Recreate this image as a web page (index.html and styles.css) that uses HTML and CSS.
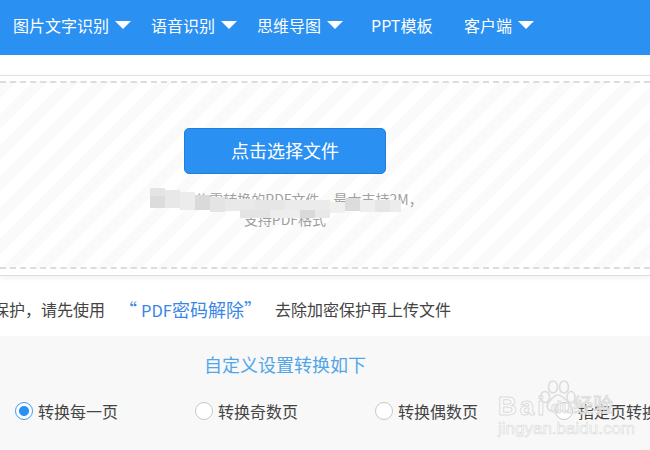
FILE: index.html
```html
<!DOCTYPE html>
<html lang="zh-CN">
<head>
<meta charset="utf-8">
<title>PDF转换</title>
<link rel="stylesheet" href="styles.css">
</head>
<body>
<nav class="nav">
  <div class="nav-item nav-a">图片文字识别<i class="arrow"></i></div>
  <div class="nav-item nav-b">语音识别<i class="arrow"></i></div>
  <div class="nav-item nav-c">思维导图<i class="arrow"></i></div>
  <div class="nav-item nav-d">PPT模板</div>
  <div class="nav-item">客户端<i class="arrow"></i></div>
</nav>
<section class="upload">
  <div class="drop">
    <button class="pick">点击选择文件</button>
    <p class="hint">请上传需转换的PDF文件，最大支持2M，</p>
    <p class="hint hint2">支持PDF格式</p>
  </div>
</section>
<p class="notice">
  <span class="notice-a">保护，请先使用</span>
  <a class="notice-link">“ <span class="latin">PDF</span>密码解除”</a>
  <span class="notice-c">去除加密保护再上传文件</span>
</p>
<section class="settings">
  <h2 class="settings-title">自定义设置转换如下</h2>
  <div class="options">
    <label class="option"><i class="radio on"></i>转换每一页</label>
    <label class="option"><i class="radio"></i>转换奇数页</label>
    <label class="option"><i class="radio"></i>转换偶数页</label>
    <label class="option"><i class="radio"></i>指定页转换</label>
  </div>
</section>
<svg class="mosaic" width="270" height="40" viewBox="0 0 270 40" aria-hidden="true">
  <rect x="0" y="0" width="15" height="20" fill="#e4e4e4"/>
  <rect x="0" y="8" width="15" height="12" fill="#dcdcdc"/>
  <rect x="15" y="2" width="15" height="18" fill="#e8e8e8"/>
  <rect x="30" y="4" width="15" height="18" fill="#ececec"/>
  <rect x="45" y="7" width="15" height="15" fill="#dadada"/>
  <rect x="60" y="9" width="15" height="15" fill="#e4e4e4"/>
  <rect x="75" y="11" width="30" height="12" fill="#e9e9e9"/>
  <rect x="105" y="12" width="30" height="11" fill="#e6e6e6"/>
  <rect x="135" y="12" width="45" height="11" fill="#ebebeb"/>
  <rect x="180" y="14" width="15" height="11" fill="#f0f0f0"/>
  <rect x="195" y="10" width="15" height="13" fill="#dcdcdc"/>
  <rect x="210" y="12" width="15" height="12" fill="#eeeeee"/>
  <rect x="225" y="12" width="15" height="12" fill="#e6e6e6"/>
  <rect x="240" y="12" width="11" height="12" fill="#ececec"/>
  <rect x="90" y="22" width="30" height="8" fill="#e4e4e4"/>
  <rect x="120" y="22" width="30" height="8" fill="#ededed"/>
  <rect x="150" y="22" width="15" height="8" fill="#d9d9d9"/>
  <rect x="165" y="22" width="15" height="8" fill="#e8e8e8"/>
</svg>
<div class="watermark" aria-hidden="true">
  <svg class="paw" width="38" height="36" viewBox="0 0 38 36">
    <g fill="none" stroke="#dcdcdc" stroke-width="1.6">
      <ellipse cx="7" cy="17" rx="4.5" ry="5.5"/>
      <ellipse cx="15" cy="7" rx="4.5" ry="6"/>
      <ellipse cx="26" cy="7" rx="4.5" ry="6"/>
      <ellipse cx="33" cy="17" rx="4" ry="5.5"/>
      <path d="M20 15c-4 0-6 4-9 7-3 3-2 9 3 9 3 0 4-1 6-1s4 1 7 1c5 0 6-6 3-9-3-3-6-7-10-7z"/>
    </g>
  </svg>
  <span class="wm-logo">Bai</span><span class="wm-du">du</span><span class="wm-jy">经验</span>
  <span class="wm-url">jingyan.baidu.com</span>
</div>
</body>
</html>
```
FILE: styles.css
```css
* { box-sizing: border-box; }
html, body { margin: 0; padding: 0; }
body {
  width: 650px;
  height: 450px;
  overflow: hidden;
  position: relative;
  background: #fff;
  font-family: "Noto Sans CJK SC", "Liberation Sans", sans-serif;
}
.nav {
  height: 55px;
  background: #2a90f1;
  display: flex;
  align-items: center;
  padding: 0 0 5px 13px;
  color: #fff;
  font-size: 16px;
  white-space: nowrap;
}
.nav-item { display: flex; align-items: center; }
.nav-a { width: 138px; }
.nav-b { width: 106px; }
.nav-c { width: 114px; }
.nav-d { width: 93px; }
.arrow {
  width: 0;
  height: 0;
  margin: -1px 0 0 6px;
  border-left: 8px solid transparent;
  border-right: 8px solid transparent;
  border-top: 8px solid #fff;
}
.upload {
  margin-top: 20px;
  height: 201px;
  border-top: 1px solid #dedede;
  border-bottom: 1px solid #dedede;
  padding: 5px 0 6px;
  box-shadow: 0 2px 5px rgba(0, 0, 0, 0.06);
}
.drop {
  height: 188px;
  border-top: 2px dashed #dcdcdc;
  border-bottom: 2px dashed #dcdcdc;
  background: repeating-linear-gradient(135deg, #fafafa 0, #fafafa 11px, #fff 11px, #fff 22px);
  padding-top: 45px;
  text-align: center;
}
.pick {
  display: block;
  width: 202px;
  height: 46px;
  margin-left: 184px;
  padding: 0 0 2px;
  background: #2a90f1;
  border: 1px solid #1f7fd8;
  border-radius: 5px;
  color: #fff;
  font: 18px "Noto Sans CJK SC", sans-serif;
}
.hint {
  margin: 15px 0 0 0;
  height: 20px;
  width: 590px;
  font-size: 14px;
  line-height: 20px;
  color: #a0a0a0;
}
.hint2 { margin-top: 0; width: 570px; }
.notice {
  margin: 0;
  height: 60px;
  display: flex;
  align-items: center;
  font-size: 16px;
  color: #444;
  white-space: nowrap;
  padding-top: 5px;
}
.notice-a { margin-left: -7px; width: 126px; }
.notice-link { color: #3a86e6; font-size: 18px; width: 156px; }
.latin { font-size: 16.5px; }
.settings {
  height: 114px;
  background: #f8f8f8;
}
.settings-title {
  margin: 0;
  padding: 15px 0 0 204px;
  height: 56px;
  font-size: 18px;
  line-height: 26px;
  font-weight: 400;
  color: #52a5e6;
}
.options { display: flex; padding: 6px 0 0 15px; }
.option {
  flex: 0 0 180px;
  display: flex;
  align-items: center;
  gap: 5px;
  font-size: 16px;
  line-height: 26px;
  color: #444;
  white-space: nowrap;
}
.radio {
  width: 18px;
  height: 18px;
  border-radius: 50%;
  border: 1px solid #c8c8c8;
  background: #fff;
}
.radio.on {
  border-color: #3f9cf0;
  background: radial-gradient(circle, #2a90f1 0, #2a90f1 4.5px, #fff 5.5px);
}
.mosaic {
  position: absolute;
  left: 150px;
  top: 188px;
}
.watermark {
  position: absolute;
  left: 498px;
  top: 378px;
  width: 150px;
  height: 72px;
  color: rgba(255, 255, 255, 0.45);
  -webkit-text-stroke: 1px #dcdcdc;
  font-family: "Liberation Sans", sans-serif;
  pointer-events: none;
}
.paw { position: absolute; left: 40px; top: 2px; }
.wm-logo, .wm-du, .wm-jy, .wm-url { position: absolute; white-space: nowrap; }
.wm-logo { left: 0; top: 13px; font-size: 26px; font-weight: 700; letter-spacing: 3px; }
.wm-du { left: 53px; top: 20px; font-size: 17px; font-weight: 700; }
.wm-jy { left: 75px; top: 12px; font-size: 20px; font-family: "Noto Sans CJK SC", sans-serif; }
.wm-url { left: 0; top: 41px; font-size: 17px; -webkit-text-stroke: 0.6px #dcdcdc; }
```
